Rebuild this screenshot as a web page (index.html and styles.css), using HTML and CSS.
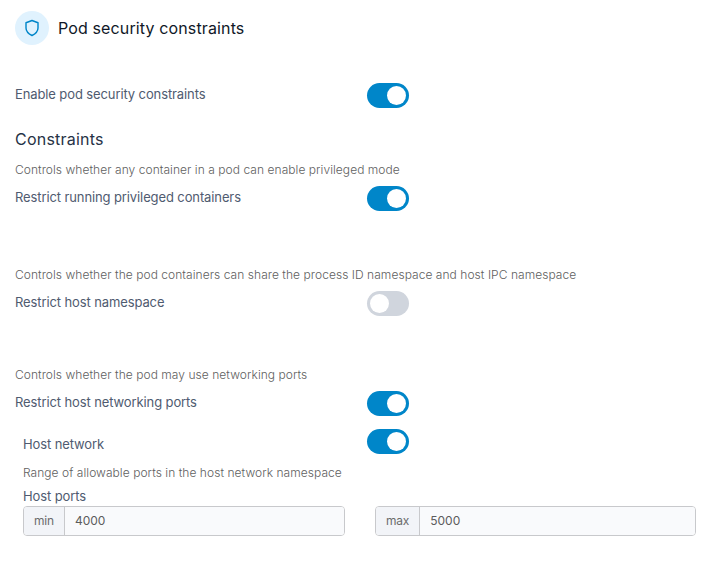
FILE: index.html
```html
<!DOCTYPE html>
<html lang="en">
<head>
<meta charset="utf-8">
<title>Pod security constraints</title>
<link rel="stylesheet" href="styles.css">
</head>
<body>
<form class="page">
  <header class="title">
    <span class="badge"><svg width="18" height="18" viewBox="0 0 24 24" fill="none" stroke="currentColor" stroke-width="1.9" stroke-linecap="round" stroke-linejoin="round"><path d="M12 22s8-4 8-10V5l-8-3-8 3v7c0 6 8 10 8 10z"/></svg></span>
    <h1>Pod security constraints</h1>
  </header>
  <div class="row enable"><span class="label">Enable pod security constraints</span><span class="switch on"></span></div>
  <h2>Constraints</h2>
  <section class="group privileged">
    <p>Controls whether any container in a pod can enable privileged mode</p>
    <div class="row"><span class="label">Restrict running privileged containers</span><span class="switch on"></span></div>
  </section>
  <section class="group namespace">
    <p>Controls whether the pod containers can share the process ID namespace and host IPC namespace</p>
    <div class="row"><span class="label">Restrict host namespace</span><span class="switch"></span></div>
  </section>
  <section class="group">
    <p>Controls whether the pod may use networking ports</p>
    <div class="row"><span class="label">Restrict host networking ports</span><span class="switch on"></span></div>
  </section>
  <section class="network">
    <div class="row"><span class="label">Host network</span><span class="switch on"></span></div>
    <p>Range of allowable ports in the host network namespace</p>
    <span class="label ports-label">Host ports</span>
    <div class="ports">
      <label class="port"><span class="addon">min</span><span class="value">4000</span></label>
      <label class="port"><span class="addon">max</span><span class="value">5000</span></label>
    </div>
  </section>
</form>
</body>
</html>
```
FILE: styles.css
```css
* { box-sizing: border-box; }
body { margin: 0; background: #fff; color: #101828; font-family: Inter, sans-serif; font-size: 13px; }
.page { padding: 11px 30px 0 15px; }
.title { display: flex; align-items: center; gap: 9px; height: 34px; }
.badge { display: flex; align-items: center; justify-content: center; width: 34px; height: 34px; border-radius: 50%; background: #e0f2fe; color: #0086c9; }
h1, h2 { margin: 0; font-size: 16px; font-weight: 400; line-height: 20px; letter-spacing: 0.13px; }
h2 { margin-top: 20px; margin-bottom: 11px; color: #263246; letter-spacing: 0.22px; }
p { margin: 0; height: 20px; font-size: 12px; font-weight: 300; line-height: 20px; letter-spacing: 0.05px; color: #606060; white-space: nowrap; }
.row { display: grid; grid-template-columns: 352px 1fr; height: 26px; }
.enable { margin-top: 38px; }
.label { font-weight: 400; line-height: 22px; letter-spacing: -0.11px; color: #4f5b70; }
.switch { width: 42px; height: 25px; border-radius: 13px; background: #d0d5dd; padding: 3px; }
.switch::before { content: ""; display: block; width: 19px; height: 19px; border-radius: 50%; background: #fff; }
.switch.on { background: #0086c9; }
.switch.on::before { margin-left: 17px; }
.group .row { margin-top: 6px; }
.group { margin-top: 10px; }
.privileged { height: 95px; }
.namespace { height: 90px; }
.network { margin: 12px 0 0 8px; }
.network .row { grid-template-columns: 344px 1fr; }
.network .row .label { line-height: 31px; }
.network p { margin-top: 8px; }
.ports-label { display: block; margin-top: 2px; }
.ports { display: grid; grid-template-columns: 322px 321px; gap: 30px; margin-top: -1px; }
.port { display: flex; height: 30px; border: 1px solid #c8c9cc; border-radius: 4px; overflow: hidden; line-height: 28px; font-size: 12px; color: #5c5c5c; }
.addon { padding: 0 10px; border-right: 1px solid #c8c9cc; background: #f2f4f8; letter-spacing: -0.2px; color: #6b6b6b; }
.value { flex: 1; padding-left: 10px; background: #f9fafc; }
```
